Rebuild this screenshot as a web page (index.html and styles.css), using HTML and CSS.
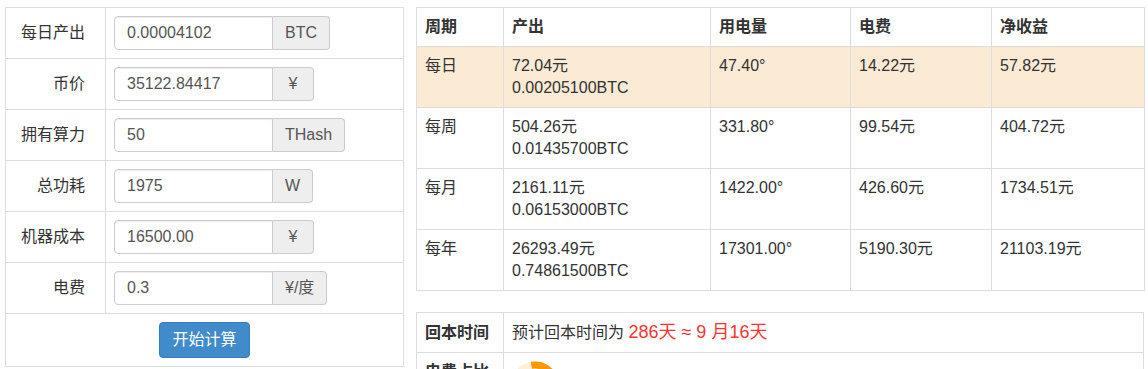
FILE: index.html
```html
<!DOCTYPE html>
<html lang="zh-CN">
<head>
<meta charset="utf-8">
<title>矿机收益计算</title>
<link rel="stylesheet" href="styles.css">
</head>
<body>
<div class="page">
  <div class="left">
    <table class="form-table">
      <tr>
        <td class="label">每日产出</td>
        <td class="field"><div class="input-group"><input class="form-control" value="0.00004102"><span class="addon">BTC</span></div></td>
      </tr>
      <tr>
        <td class="label">币价</td>
        <td class="field"><div class="input-group"><input class="form-control" value="35122.84417"><span class="addon addon-wide">¥</span></div></td>
      </tr>
      <tr>
        <td class="label">拥有算力</td>
        <td class="field"><div class="input-group"><input class="form-control" value="50"><span class="addon">THash</span></div></td>
      </tr>
      <tr>
        <td class="label">总功耗</td>
        <td class="field"><div class="input-group"><input class="form-control" value="1975"><span class="addon">W</span></div></td>
      </tr>
      <tr>
        <td class="label">机器成本</td>
        <td class="field"><div class="input-group"><input class="form-control" value="16500.00"><span class="addon addon-wide">¥</span></div></td>
      </tr>
      <tr>
        <td class="label">电费</td>
        <td class="field"><div class="input-group"><input class="form-control" value="0.3"><span class="addon">¥/度</span></div></td>
      </tr>
      <tr>
        <td class="action" colspan="2"><button class="btn-primary" type="button">开始计算</button></td>
      </tr>
    </table>
  </div>
  <div class="right">
    <table class="result">
      <colgroup>
        <col class="c1"><col class="c2"><col class="c3"><col class="c4"><col class="c5">
      </colgroup>
      <thead>
        <tr><th>周期</th><th>产出</th><th>用电量</th><th>电费</th><th>净收益</th></tr>
      </thead>
      <tbody>
        <tr class="highlight"><td>每日</td><td>72.04元<br>0.00205100BTC</td><td>47.40°</td><td>14.22元</td><td>57.82元</td></tr>
        <tr><td>每周</td><td>504.26元<br>0.01435700BTC</td><td>331.80°</td><td>99.54元</td><td>404.72元</td></tr>
        <tr><td>每月</td><td>2161.11元<br>0.06153000BTC</td><td>1422.00°</td><td>426.60元</td><td>1734.51元</td></tr>
        <tr><td>每年</td><td>26293.49元<br>0.74861500BTC</td><td>17301.00°</td><td>5190.30元</td><td>21103.19元</td></tr>
      </tbody>
    </table>
    <table class="summary">
      <colgroup><col class="c1"><col></colgroup>
      <tr>
        <th>回本时间</th>
        <td>预计回本时间为 <span class="red">286天 ≈ 9 月16天</span></td>
      </tr>
      <tr>
        <th class="top">电费占比</th>
        <td class="chart-cell">
          <svg class="donut" width="80" height="80" viewBox="0 0 80 80">
            <circle cx="23" cy="25" r="21" fill="none" stroke="#fdf0d5" stroke-width="7"/>
            <circle cx="23" cy="25" r="21" fill="none" stroke="#ff9800" stroke-width="7" stroke-dasharray="92 200" transform="rotate(-100 23 25)"/>
          </svg>
        </td>
      </tr>
    </table>
  </div>
</div>
</body>
</html>
```

FILE: styles.css
```css
* { box-sizing: border-box; }

body {
  margin: 0;
  background: #fff;
  font-family: "Liberation Sans", Arial, "Noto Sans CJK SC", sans-serif;
  font-size: 16px;
  line-height: 22px;
  color: #333;
}

.page {
  display: flex;
  align-items: flex-start;
  gap: 12px;
  padding: 7px 0 0 5px;
}

table {
  border-collapse: collapse;
  border-spacing: 0;
}

/* left form */
.form-table {
  width: 399px;
  border: 1px solid #ddd;
}

.form-table td {
  border: 1px solid #ddd;
  padding: 8px;
  vertical-align: middle;
}

.form-table .label {
  width: 100px;
  text-align: right;
  padding-right: 20px;
  color: #333;
}

.input-group {
  display: flex;
  align-items: stretch;
}

.form-control {
  width: 159px;
  height: 34px;
  padding: 6px 12px;
  font-family: inherit;
  font-size: 16px;
  color: #555;
  background: #fff;
  border: 1px solid #ccc;
  border-radius: 4px 0 0 4px;
  box-shadow: inset 0 1px 1px rgba(0, 0, 0, .075);
  outline: none;
}

.addon {
  display: flex;
  align-items: center;
  justify-content: center;
  height: 34px;
  padding: 0 12px;
  font-size: 16px;
  color: #555;
  background: #eee;
  border: 1px solid #ccc;
  border-left: 0;
  border-radius: 0 4px 4px 0;
}

.addon-wide {
  width: 41px;
}

.form-table .action {
  text-align: center;
  padding: 8px;
}

.btn-primary {
  display: inline-block;
  padding: 6px 12px;
  font-family: inherit;
  font-size: 16px;
  line-height: 22px;
  color: #fff;
  background: #428bca;
  border: 1px solid #357ebd;
  border-radius: 4px;
  cursor: pointer;
}

/* right tables */
.result,
.summary {
  width: 728px;
  border: 1px solid #ddd;
  table-layout: fixed;
}

.result { margin-bottom: 21px; }

.c1 { width: 87px; }
.c2 { width: 207px; }
.c3 { width: 140px; }
.c4 { width: 141px; }
.c5 { width: 153px; }

.result th,
.result td,
.summary th,
.summary td {
  border: 1px solid #ddd;
  padding: 8px;
  text-align: left;
  vertical-align: top;
}

.result th {
  font-weight: bold;
  vertical-align: bottom;
}

.result .highlight td {
  background: #fbead4;
}

.summary th,
.summary td {
  vertical-align: middle;
}

.summary th {
  font-weight: bold;
}

.summary th.top { vertical-align: top; }

.red {
  color: #f33;
  font-size: 18px;
}

.chart-cell {
  height: 200px;
  vertical-align: top !important;
}

.donut { display: block; }
```
